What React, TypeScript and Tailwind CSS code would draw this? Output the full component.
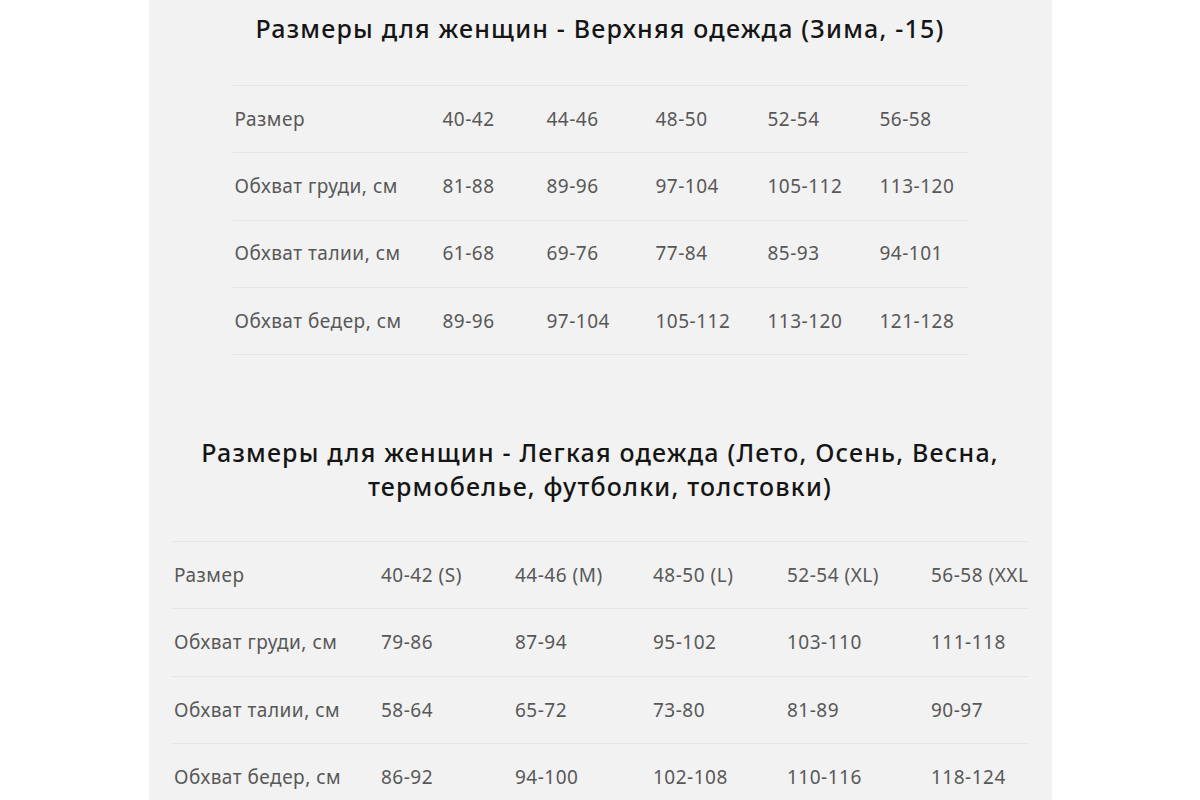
const winter = {
  head: ["Размер", "40-42", "44-46", "48-50", "52-54", "56-58"],
  rows: [
    ["Обхват груди, см", "81-88", "89-96", "97-104", "105-112", "113-120"],
    ["Обхват талии, см", "61-68", "69-76", "77-84", "85-93", "94-101"],
    ["Обхват бедер, см", "89-96", "97-104", "105-112", "113-120", "121-128"],
  ],
};

const light = {
  head: ["Размер", "40-42 (S)", "44-46 (M)", "48-50 (L)", "52-54 (XL)", "56-58 (XXL)"],
  rows: [
    ["Обхват груди, см", "79-86", "87-94", "95-102", "103-110", "111-118"],
    ["Обхват талии, см", "58-64", "65-72", "73-80", "81-89", "90-97"],
    ["Обхват бедер, см", "86-92", "94-100", "102-108", "110-116", "118-124"],
  ],
};

const SizeTable = ({ data, cols, width }: { data: { head: string[]; rows: string[][] }; cols: string; width: string }) => {
  const all = [data.head, ...data.rows];
  return (
    <div className={`${width} mx-auto overflow-hidden border-t border-[#e4e4e4]`}>
      {all.map((row, i) => (
        <div key={i} className={`grid ${cols} h-[67.3px] items-center border-b border-[#e4e4e4]`}>
          {row.map((cell, j) => (
            <span key={j} className="pl-[2px] whitespace-nowrap text-[19px] tracking-[0.5px] text-[#585858]">
              {cell}
            </span>
          ))}
        </div>
      ))}
    </div>
  );
};

export default function App() {
  return (
    <div className="min-h-[800px] bg-white flex justify-center font-['Noto_Sans',sans-serif]">
      <div className="w-[903px] h-[800px] overflow-hidden bg-[#f2f2f2]">
        <h2 className="pt-[11px] text-center text-[25px] leading-[34px] font-medium text-[#151515] tracking-[1.2px]">
          Размеры для женщин - Верхняя одежда (Зима, -15)
        </h2>
        <div className="mt-[40px]">
          <SizeTable
            data={winter}
            width="w-[735px]"
            cols="grid-cols-[208px_104px_109px_112px_112px_90px]"
          />
        </div>
        <h2 className="mt-[80px] mx-auto w-[840px] text-center text-[25px] leading-[34px] font-medium text-[#151515] tracking-[1.2px]">
          Размеры для женщин - Легкая одежда (Лето, Осень, Весна, термобелье, футболки, толстовки)
        </h2>
        <div className="mt-[38px]">
          <SizeTable
            data={light}
            width="w-[856px]"
            cols="grid-cols-[207px_134px_138px_134px_144px_120px]"
          />
        </div>
      </div>
    </div>
  );
}
